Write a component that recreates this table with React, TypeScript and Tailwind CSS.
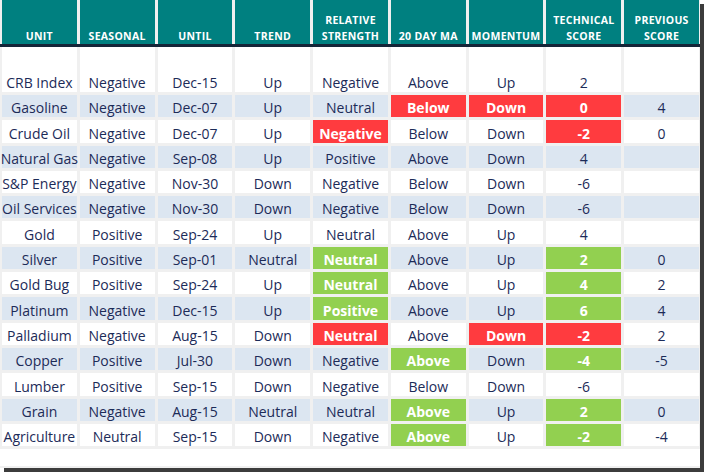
import React from "react";

type Cell = string | [string, "R" | "G"];

const headers: string[][] = [
  ["UNIT"],
  ["SEASONAL"],
  ["UNTIL"],
  ["TREND"],
  ["RELATIVE", "STRENGTH"],
  ["20 DAY MA"],
  ["MOMENTUM"],
  ["TECHNICAL", "SCORE"],
  ["PREVIOUS", "SCORE"],
];

const rows: Cell[][] = [
  ["CRB Index", "Negative", "Dec-15", "Up", "Negative", "Above", "Up", "2", ""],
  ["Gasoline", "Negative", "Dec-07", "Up", "Neutral", ["Below", "R"], ["Down", "R"], ["0", "R"], "4"],
  ["Crude Oil", "Negative", "Dec-07", "Up", ["Negative", "R"], "Below", "Down", ["-2", "R"], "0"],
  ["Natural Gas", "Negative", "Sep-08", "Up", "Positive", "Above", "Down", "4", ""],
  ["S&P Energy", "Negative", "Nov-30", "Down", "Negative", "Below", "Down", "-6", ""],
  ["Oil Services", "Negative", "Nov-30", "Down", "Negative", "Below", "Down", "-6", ""],
  ["Gold", "Positive", "Sep-24", "Up", "Neutral", "Above", "Up", "4", ""],
  ["Silver", "Positive", "Sep-01", "Neutral", ["Neutral", "G"], "Above", "Up", ["2", "G"], "0"],
  ["Gold Bug", "Positive", "Sep-24", "Up", ["Neutral", "G"], "Above", "Up", ["4", "G"], "2"],
  ["Platinum", "Negative", "Dec-15", "Up", ["Positive", "G"], "Above", "Up", ["6", "G"], "4"],
  ["Palladium", "Negative", "Aug-15", "Down", ["Neutral", "R"], "Above", ["Down", "R"], ["-2", "R"], "2"],
  ["Copper", "Positive", "Jul-30", "Down", "Negative", ["Above", "G"], "Down", ["-4", "G"], "-5"],
  ["Lumber", "Positive", "Sep-15", "Down", "Negative", "Below", "Down", "-6", ""],
  ["Grain", "Negative", "Aug-15", "Neutral", "Neutral", ["Above", "G"], "Up", ["2", "G"], "0"],
  ["Agriculture", "Neutral", "Sep-15", "Down", "Negative", ["Above", "G"], "Up", ["-2", "G"], "-4"],
];

export default function App() {
  return (
    <div
      className="w-[706px] h-[474px] bg-white overflow-hidden"
      style={{ fontFamily: '"Open Sans", "Noto Sans", sans-serif' }}
    >
      <div className="w-[700px] h-[468px] bg-[#f0f0f0] flex flex-col shadow-[4px_4px_0px_rgba(50,50,50,0.95)]">
        <div className="grid grid-cols-9 gap-x-[3px] pl-[2px] pr-[1px] h-[44px]">
          {headers.map((h, i) => (
            <div
              key={i}
              className="bg-[#008080] text-white font-bold text-[10.5px] leading-[16px] flex flex-col items-center justify-end pb-0 tracking-[0.3px]"
            >
              {h.map((l) => (
                <span key={l}>{l}</span>
              ))}
            </div>
          ))}
        </div>
        <div className="h-[3px] bg-[#152538]" />
        <div className="grid grid-cols-9 gap-x-[3px] gap-y-[3px] pl-[2px] pr-[1px] grid-rows-[45px_repeat(14,22.3px)]">
          {rows.map((r, ri) =>
            r.map((c, ci) => {
              const text = typeof c === "string" ? c : c[0];
              const hl = typeof c === "string" ? null : c[1];
              const base = ri % 2 === 1 ? "bg-[#dce6f1]" : "bg-white";
              const bg = hl === "R" ? "bg-[#ff3b3f]" : hl === "G" ? "bg-[#92d050]" : base;
              const color = hl ? "text-white font-bold" : "text-[#1c2b58]";
              return (
                <div
                  key={ri + "-" + ci}
                  className={`${bg} ${color} text-[14px] leading-[19px] flex items-end justify-center whitespace-nowrap overflow-visible pb-0`}
                >
                  {text}
                </div>
              );
            })
          )}
        </div>
        <div className="mt-[3px] h-[17px] bg-white" />
      </div>
    </div>
  );
}
